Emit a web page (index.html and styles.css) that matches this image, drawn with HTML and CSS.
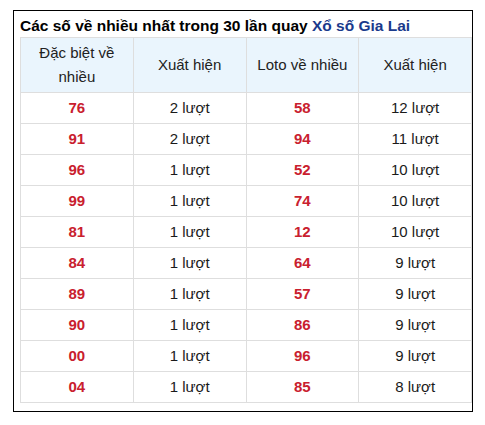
FILE: index.html
```html
<!DOCTYPE html>
<html lang="vi">
<head>
<meta charset="utf-8">
<link rel="stylesheet" href="styles.css">
</head>
<body>
<div class="box">
  <div class="title">Các số về nhiều nhất trong 30 lần quay <span class="prov">Xổ số Gia Lai</span></div>
  <table class="stats">
    <thead>
      <tr><th>Đặc biệt về nhiều</th><th>Xuất hiện</th><th>Loto về nhiều</th><th>Xuất hiện</th></tr>
    </thead>
    <tbody>
      <tr><td class="num">76</td><td>2 lượt</td><td class="num">58</td><td>12 lượt</td></tr>
      <tr><td class="num">91</td><td>2 lượt</td><td class="num">94</td><td>11 lượt</td></tr>
      <tr><td class="num">96</td><td>1 lượt</td><td class="num">52</td><td>10 lượt</td></tr>
      <tr><td class="num">99</td><td>1 lượt</td><td class="num">74</td><td>10 lượt</td></tr>
      <tr><td class="num">81</td><td>1 lượt</td><td class="num">12</td><td>10 lượt</td></tr>
      <tr><td class="num">84</td><td>1 lượt</td><td class="num">64</td><td>9 lượt</td></tr>
      <tr><td class="num">89</td><td>1 lượt</td><td class="num">57</td><td>9 lượt</td></tr>
      <tr><td class="num">90</td><td>1 lượt</td><td class="num">86</td><td>9 lượt</td></tr>
      <tr><td class="num">00</td><td>1 lượt</td><td class="num">96</td><td>9 lượt</td></tr>
      <tr><td class="num">04</td><td>1 lượt</td><td class="num">85</td><td>8 lượt</td></tr>
    </tbody>
  </table>
</div>
</body>
</html>
```
FILE: styles.css
```css
html, body {
  margin: 0;
  padding: 0;
  background: #fff;
}
body {
  font-family: "Liberation Sans", Arial, sans-serif;
  color: #111;
}
.box {
  box-sizing: border-box;
  width: 460px;
  margin: 10px 0 0 13px;
  border: 1px solid #000;
  padding: 0 0 8px 6px;
}
.title {
  font-size: 15.5px;
  font-weight: bold;
  color: #000;
  line-height: 22px;
  padding-top: 4px;
  white-space: nowrap;
}
.prov {
  color: #1a3a8c;
}
.stats {
  width: 452px;
  border-collapse: collapse;
  table-layout: fixed;
  font-size: 15px;
}
.stats th, .stats td {
  border: 1px solid #dedede;
  text-align: center;
  line-height: 24px;
  padding: 3px 6px;
  color: #1a1a1a;
}
.stats th {
  font-weight: normal;
  background: #eaf5fd;
  color: #222;
}
.stats td.num {
  color: #c9202e;
  font-weight: bold;
}
```
